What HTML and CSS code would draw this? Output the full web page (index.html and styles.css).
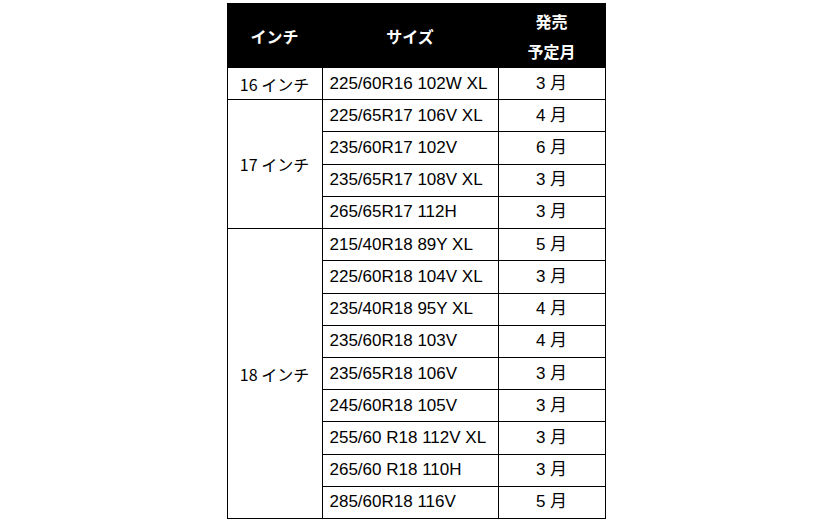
FILE: index.html
```html
<!DOCTYPE html>
<html lang="ja">
<head>
<meta charset="utf-8">
<link rel="stylesheet" href="styles.css">
</head>
<body>
<table class="tire-table">
  <colgroup>
    <col class="c-inch">
    <col class="c-size">
    <col class="c-month">
  </colgroup>
  <thead>
    <tr class="head-row">
      <th>インチ</th>
      <th>サイズ</th>
      <th>発売<br>予定月</th>
    </tr>
  </thead>
  <tbody>
    <tr><td class="inch">16 インチ</td><td class="size">225/60R16 102W XL</td><td class="month">3 月</td></tr>
    <tr><td class="inch" rowspan="4">17 インチ</td><td class="size">225/65R17 106V XL</td><td class="month">4 月</td></tr>
    <tr><td class="size">235/60R17 102V</td><td class="month">6 月</td></tr>
    <tr><td class="size">235/65R17 108V XL</td><td class="month">3 月</td></tr>
    <tr><td class="size">265/65R17 112H</td><td class="month">3 月</td></tr>
    <tr><td class="inch" rowspan="9">18 インチ</td><td class="size">215/40R18 89Y XL</td><td class="month">5 月</td></tr>
    <tr><td class="size">225/60R18 104V XL</td><td class="month">3 月</td></tr>
    <tr><td class="size">235/40R18 95Y XL</td><td class="month">4 月</td></tr>
    <tr><td class="size">235/60R18 103V</td><td class="month">4 月</td></tr>
    <tr><td class="size">235/65R18 106V</td><td class="month">3 月</td></tr>
    <tr><td class="size">245/60R18 105V</td><td class="month">3 月</td></tr>
    <tr><td class="size">255/60 R18 112V XL</td><td class="month">3 月</td></tr>
    <tr><td class="size">265/60 R18 110H</td><td class="month">3 月</td></tr>
    <tr><td class="size">285/60R18 116V</td><td class="month">5 月</td></tr>
  </tbody>
</table>
</body>
</html>
```

FILE: styles.css
```css
html, body {
  margin: 0;
  padding: 0;
  background: #fff;
}

body {
  font-family: "Noto Sans CJK JP", "Liberation Sans", sans-serif;
  color: #000;
}

.tire-table {
  border-collapse: collapse;
  table-layout: fixed;
  width: 378px;
  margin: 3px auto 0;
}

.c-inch { width: 95px; }
.c-size { width: 176px; }
.c-month { width: 107px; }

.tire-table .head-row {
  height: 64px;
}

.tire-table th {
  background: #000;
  color: #fff;
  font-weight: 700;
  font-size: 16px;
  line-height: 30px;
  padding: 0;
  border: 1px solid #000;
  text-align: center;
  vertical-align: middle;
}

.tire-table tbody tr {
  height: 32.22px;
}

.tire-table td {
  border: 1px solid #000;
  padding: 0;
  font-size: 16px;
  line-height: 20px;
  vertical-align: middle;
}

.tire-table td.inch,
.tire-table td.month {
  text-align: center;
}

.tire-table td.month {
  font-family: "Liberation Sans", "Noto Sans CJK JP", sans-serif;
  font-size: 17px;
}

.tire-table td.size {
  font-family: "Liberation Sans", "Noto Sans CJK JP", sans-serif;
  font-size: 17px;
  padding-left: 7px;
}
```
